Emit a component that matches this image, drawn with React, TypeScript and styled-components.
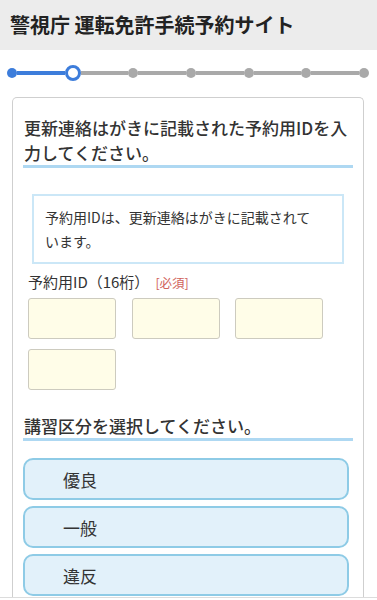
import React from "react";
import styled, { createGlobalStyle } from "styled-components";

const Global = createGlobalStyle`
  html, body { margin: 0; padding: 0; background: #fff; }
  body { font-family: "Noto Sans CJK JP", "Noto Sans", sans-serif; color: #333; }
  * { box-sizing: border-box; }
`;

const Header = styled.header`
  height: 50px;
  background: #ececec;
  display: flex;
  align-items: center;
  padding: 0 10px 2px 10px;
`;

const Title = styled.h1`
  margin: 0;
  font-size: 20px;
  font-weight: 700;
  color: #222;
  letter-spacing: 0;
`;

const Progress = styled.div`
  display: flex;
  align-items: center;
  height: 46px;
  padding: 0 8px 0 7px;
`;

const Dot = styled.span<{ $state: "done" | "current" | "todo" }>`
  flex: none;
  border-radius: 50%;
  width: ${(p) => (p.$state === "current" ? 16 : 10)}px;
  height: ${(p) => (p.$state === "current" ? 16 : 10)}px;
  background: ${(p) =>
    p.$state === "done" ? "#3d7ddb" : p.$state === "current" ? "#fff" : "#a9a9a9"};
  border: ${(p) => (p.$state === "current" ? "3px solid #3d7ddb" : "none")};
`;

const Segment = styled.span<{ $active: boolean }>`
  flex: 1;
  height: 4px;
  background: ${(p) => (p.$active ? "#3d7ddb" : "#a9a9a9")};
`;

const Card = styled.section`
  margin: 1px 13px 0 12px;
  border: 1px solid #cfcfcf;
  border-bottom: none;
  border-radius: 5px 5px 0 0;
  padding: 17px 10px 20px 10px;
`;

const Heading = styled.h2`
  margin: 0;
  font-size: 17px;
  line-height: 25px;
  font-weight: 500;
  color: #333;
  padding-left: 1px;
  border-bottom: 3px solid #aed8f2;
`;

const Note = styled.div`
  margin: 26px 9px 0 9px;
  border: 2px solid #cbe7f7;
  padding: 9px 24px 9px 11px;
  font-size: 14px;
  line-height: 24px;
  color: #333;
`;

const Label = styled.div`
  margin: 8px 0 0 5px;
  font-size: 15px;
  line-height: 20px;
  color: #333;
  display: flex;
  align-items: baseline;
  gap: 6px;
`;

const Required = styled.span`
  font-size: 12.5px;
  color: #d0625b;
`;

const InputGrid = styled.div`
  margin: 5px 0 0 5px;
  display: grid;
  grid-template-columns: repeat(3, 88px);
  column-gap: 15.5px;
  row-gap: 10px;
`;

const IdInput = styled.input`
  width: 88px;
  height: 41px;
  background: #fffde8;
  border: 1px solid #cdcbbf;
  border-radius: 3px;
  padding: 0 6px;
  font-size: 16px;
  font-family: inherit;
  outline: none;
`;

const Heading2 = styled(Heading)`
  margin-top: 23px;
`;

const Options = styled.div`
  margin-top: 17px;
  display: flex;
  flex-direction: column;
  gap: 6px;
  padding-right: 4px;
`;

const Option = styled.button`
  height: 42px;
  background: #e2f1fa;
  border: 2px solid #8ecbe6;
  border-radius: 10px;
  text-align: left;
  padding: 0 0 0 38px;
  font-family: inherit;
  font-size: 17px;
  color: #333;
  cursor: pointer;
`;

const FooterLine = styled.div`
  position: fixed;
  left: 0;
  right: 0;
  bottom: 0;
  height: 3px;
  background: #fff;
  border-top: 1px solid #dcdcdc;
`;

const steps: Array<"done" | "current" | "todo"> = [
  "done",
  "current",
  "todo",
  "todo",
  "todo",
  "todo",
  "todo",
];

export default function App() {
  return (
    <>
      <Global />
      <Header>
        <Title>警視庁 運転免許手続予約サイト</Title>
      </Header>
      <Progress>
        {steps.map((s, i) => (
          <React.Fragment key={i}>
            {i > 0 && <Segment $active={i === 1} />}
            <Dot $state={s} />
          </React.Fragment>
        ))}
      </Progress>
      <Card>
        <Heading>更新連絡はがきに記載された予約用IDを入力してください。</Heading>
        <Note>予約用IDは、更新連絡はがきに記載されています。</Note>
        <Label>
          予約用ID（16桁）<Required>[必須]</Required>
        </Label>
        <InputGrid>
          <IdInput inputMode="numeric" maxLength={4} />
          <IdInput inputMode="numeric" maxLength={4} />
          <IdInput inputMode="numeric" maxLength={4} />
          <IdInput inputMode="numeric" maxLength={4} />
        </InputGrid>
        <Heading2>講習区分を選択してください。</Heading2>
        <Options>
          <Option>優良</Option>
          <Option>一般</Option>
          <Option>違反</Option>
        </Options>
      </Card>
      <FooterLine />
    </>
  );
}
